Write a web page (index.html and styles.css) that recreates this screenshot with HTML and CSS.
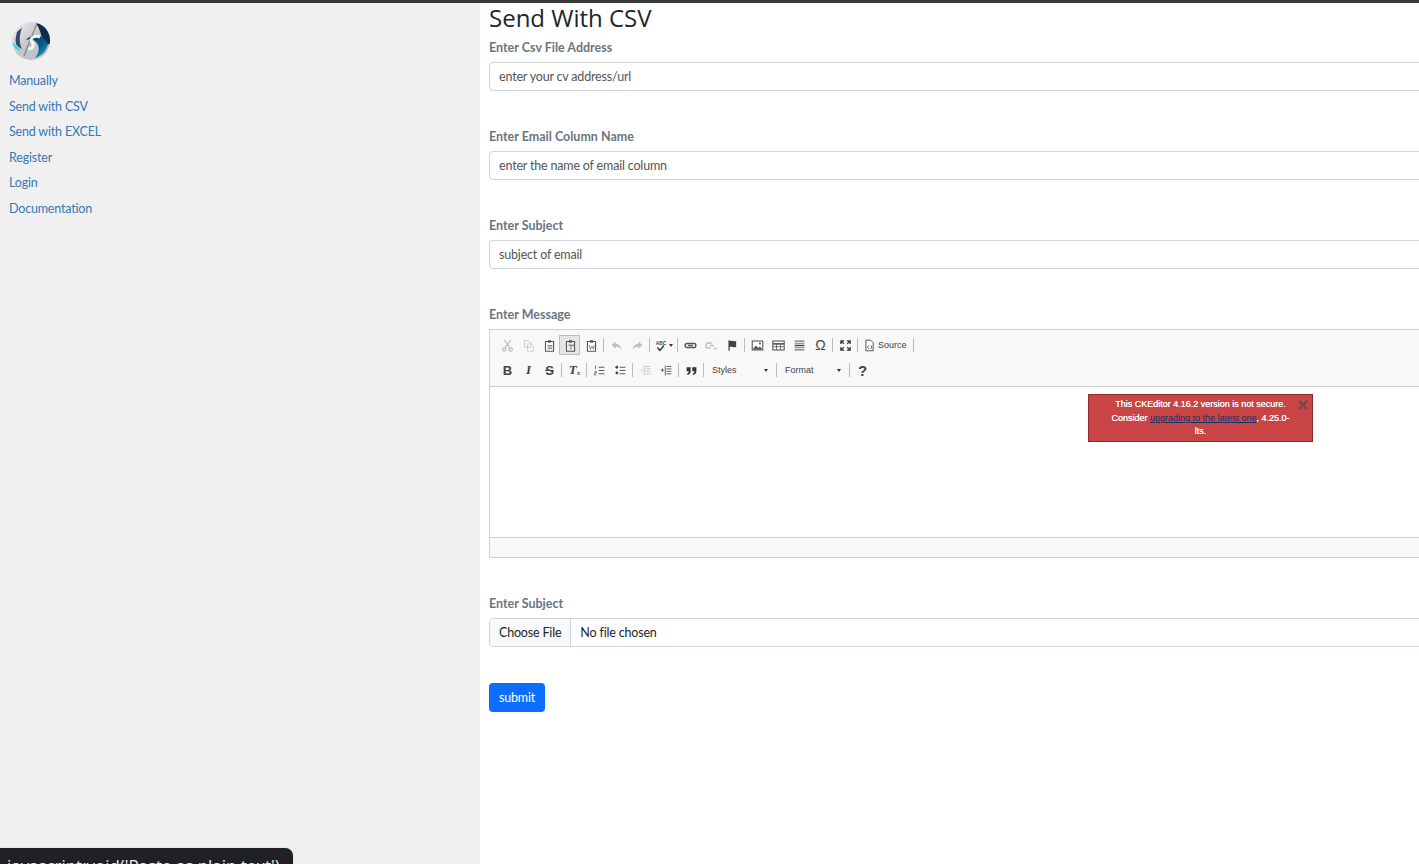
FILE: index.html
```html
<!DOCTYPE html>
<html lang="en">
<head>
    <meta charset="UTF-8">
    <meta name="viewport" content="width=device-width, initial-scale=1">
    <title>Send With CSV</title>
    <link rel="stylesheet" href="styles.css">
</head>
<body>

<div class="topbar"></div>

<div class="page">
    <nav class="sidebar">
        <svg class="logo" viewBox="0 0 42 42" width="42" height="42">
            <defs>
                <linearGradient id="ring" x1="0" y1="0" x2="1" y2="1">
                    <stop offset="0" stop-color="#f0f0f2"/>
                    <stop offset="0.5" stop-color="#c4c6ca"/>
                    <stop offset="1" stop-color="#bdbfc3"/>
                </linearGradient>
                <linearGradient id="swirl" x1="0" y1="0" x2="1" y2="1">
                    <stop offset="0" stop-color="#0b2f52"/>
                    <stop offset="0.6" stop-color="#0d5f8c"/>
                    <stop offset="1" stop-color="#2bc4e6"/>
                </linearGradient>
            </defs>
            <circle cx="21" cy="21" r="19" fill="url(#ring)"/>
            <path d="M26 3 C36 5 41 14 40 23 C38 26 35 25 32 22 C32 16 30 9 26 3 Z" fill="#0c2c4e"/>
            <path d="M16 20 C22 13 33 14 38 24 C37 31 31 36 25 38 C30 32 30 25 25 21 C22 19 19 19 16 20 Z" fill="url(#swirl)"/>
            <path d="M7 12 C9 10 10 9 12 8 C9 15 9 24 12 29 C10 28 8 27 6 24 C5 20 6 16 7 12 Z" fill="#15324f" opacity="0.85"/>
            <path d="M2 23 C5 24 8 26 10 31 C7 30 4 27 2 23 Z" fill="#35d3ee"/>
            <path d="M14 36 L27 3" stroke="#85888c" stroke-width="1.300" fill="none"/>
            <path d="M30 17 C25 15 19 18 22 22 C25 25 23 29 18 29" stroke="#eef6f9" stroke-width="3" fill="none"/>
        </svg>
        <a href="#">Manually</a>
        <a href="#">Send with CSV</a>
        <a href="#">Send with EXCEL</a>
        <a href="#">Register</a>
        <a href="#">Login</a>
        <a href="#">Documentation</a>
    </nav>

    <main class="content">
        <h3>Send With CSV</h3>
        <form class="send-form">
            <div class="field">
                <label for="csv">Enter Csv File Address</label>
                <input type="text" id="csv" placeholder="enter your cv address/url">
            </div>
            <div class="field">
                <label for="column">Enter Email Column Name</label>
                <input type="text" id="column" placeholder="enter the name of email column">
            </div>
            <div class="field">
                <label for="subject">Enter Subject</label>
                <input type="text" id="subject" placeholder="subject of email">
            </div>
            <div class="field">
                <label>Enter Message</label>
                <div class="editor">
                    <div class="toolbar">
                        <div class="tool-row">
                            <span class="btn off"><svg viewBox="0 0 16 16"><path d="M4 1l7 10M12 1L5 11" fill="none" stroke="#555" stroke-width="1.500"/><circle cx="4" cy="13" r="2" fill="none" stroke="#555" stroke-width="1.500"/><circle cx="12" cy="13" r="2" fill="none" stroke="#555" stroke-width="1.500"/></svg></span>
                            <span class="btn off"><svg viewBox="0 0 16 16"><path d="M3 2h5l3 3v5H3zM7 6h4l3 3v6H7z" fill="#fff" stroke="#666"/></svg></span>
                            <span class="btn"><svg viewBox="0 0 16 16"><path d="M3 3h10v12H3z" fill="#fff" stroke="#555" stroke-width="1.300"/><path d="M6 1.500h4v3H6z" fill="#555"/><path d="M5.500 8h6M5.500 10h6M5.500 12h6" stroke="#666"/></svg></span>
                            <span class="btn active"><svg viewBox="0 0 16 16"><path d="M3 3h10v12H3z" fill="#eee" stroke="#555" stroke-width="1.300"/><path d="M6 1.500h4v3H6z" fill="#555"/><path d="M5.500 7.500h6v1.500M8.500 7.500v5.500" fill="none" stroke="#666" stroke-width="1.100"/></svg></span>
                            <span class="btn"><svg viewBox="0 0 16 16"><path d="M3 3h10v12H3z" fill="#fff" stroke="#555" stroke-width="1.300"/><path d="M6 1.500h4v3H6z" fill="#555"/><path d="M5.500 7.500l1 5 2-3.500 2 3.500 1-5" fill="none" stroke="#666"/></svg></span>
                            <i class="sep"></i>
                            <span class="btn off"><svg viewBox="0 0 16 16"><path d="M7 3L2 7.500 7 12V9.500c3 0 5 .5 7 3-.5-4-3-6.500-7-6.500z" fill="#555"/></svg></span>
                            <span class="btn off"><svg viewBox="0 0 16 16"><path d="M9 3l5 4.500L9 12V9.500c-3 0-5 .5-7 3 .5-4 3-6.500 7-6.500z" fill="#555"/></svg></span>
                            <i class="sep"></i>
                            <span class="btn wide"><svg viewBox="0 0 16 16"><text x="1" y="7" class="abc">ABC</text><path d="M3 10.500l3 3.500 5-6" fill="none" stroke="#333" stroke-width="1.800"/></svg><b class="caret"></b></span>
                            <i class="sep"></i>
                            <span class="btn"><svg viewBox="0 0 16 16"><rect x="1.500" y="5.500" width="13" height="5" rx="2" fill="none" stroke="#555" stroke-width="1.800"/><path d="M5 8h6" stroke="#555" stroke-width="1.800"/></svg></span>
                            <span class="btn off"><svg viewBox="0 0 16 16"><path d="M9 5H4a2.500 2.500 0 000 6h3M6 8h5" fill="none" stroke="#555" stroke-width="1.800"/><path d="M11 10l3.500 3.500M14.500 10L11 13.500" stroke="#555" stroke-width="1.200"/></svg></span>
                            <span class="btn"><svg viewBox="0 0 16 16"><path d="M3 1.500h1.500v13H3zM4.500 2.500c3-1.500 5 1 8 0v7.500c-3 1-5-1.500-8 0z" fill="#444"/></svg></span>
                            <i class="sep"></i>
                            <span class="btn"><svg viewBox="0 0 16 16"><rect x="1.500" y="2.500" width="13" height="11" fill="#fff" stroke="#555" stroke-width="1.300"/><path d="M2 13l4-5 3 3 2-2 3 4z" fill="#555"/><circle cx="11" cy="5.500" r="1.300" fill="#555"/></svg></span>
                            <span class="btn"><svg viewBox="0 0 16 16"><rect x="1" y="2.500" width="14" height="11" fill="#fff" stroke="#555" stroke-width="1.300"/><path d="M1 6h14" stroke="#555" stroke-width="2"/><path d="M1 9.500h14M5.500 6v7.500M10.500 6v7.500" stroke="#555"/></svg></span>
                            <span class="btn"><svg viewBox="0 0 16 16"><path d="M2 2.500h12M2 13.500h12" stroke="#777" stroke-width="1.500"/><path d="M2 5.500h12M2 10.500h12" stroke="#999" stroke-width="1.500"/><path d="M2 8h12" stroke="#444" stroke-width="1.800"/></svg></span>
                            <span class="btn glyph omega">Ω</span>
                            <i class="sep"></i>
                            <span class="btn"><svg viewBox="0 0 16 16"><path d="M2 2h4L2 6zM14 2v4l-4-4zM2 14v-4l4 4zM14 14h-4l4-4z" fill="#444" stroke="#444"/><path d="M3 3l3 3M13 3l-3 3M3 13l3-3M13 13l-3-3" stroke="#444" stroke-width="1.600"/></svg></span>
                            <i class="sep"></i>
                            <span class="btn text-btn"><svg viewBox="0 0 16 16"><path d="M3.500 1.500h6l3 3v10h-9z" fill="#fff" stroke="#555" stroke-width="1.200"/><path d="M7 8L5.500 10 7 12M9.500 8L11 10 9.500 12" fill="none" stroke="#333"/></svg>Source</span>
                            <i class="sep"></i>
                        </div>
                        <div class="tool-row">
                            <span class="btn glyph bold">B</span>
                            <span class="btn glyph ital">I</span>
                            <span class="btn glyph strike">S</span>
                            <i class="sep"></i>
                            <span class="btn glyph clear">T<small>x</small></span>
                            <i class="sep"></i>
                            <span class="btn"><svg viewBox="0 0 16 16"><path d="M7 4h7M7 8h7M7 12h7" stroke="#555" stroke-width="1.200"/><path d="M3 2v4M2 9h2v2H2v2.500h2" fill="none" stroke="#555"/></svg></span>
                            <span class="btn"><svg viewBox="0 0 16 16"><path d="M7 4h7M7 8h7M7 12h7" stroke="#555" stroke-width="1.200"/><circle cx="3.500" cy="4" r="1.700" fill="#444"/><circle cx="3.500" cy="11" r="1.700" fill="#444"/></svg></span>
                            <i class="sep"></i>
                            <span class="btn off"><svg viewBox="0 0 16 16"><path d="M8 3h6M8 6h6M8 9h6M8 12h6M2 7.500h3M6.500 2v12" stroke="#555"/></svg></span>
                            <span class="btn"><svg viewBox="0 0 16 16"><path d="M8 3h6M8 6h6M8 9h6M8 12h6M1 7.500h4M3 5.500v4M6.500 2v12" stroke="#444"/></svg></span>
                            <i class="sep"></i>
                            <span class="btn"><svg viewBox="0 0 16 16"><path d="M2 4h5v4.500C7 11 5.500 13 3 13.500l-.5-1.500C4 11.500 4.500 10.500 4.500 9H2zM9 4h5v4.500c0 2.500-1.500 4.500-4 5L9.500 12c1.500-.5 2-1.500 2-3H9z" fill="#333"/></svg></span>
                            <i class="sep"></i>
                            <span class="combo">Styles<b class="caret"></b></span>
                            <i class="sep"></i>
                            <span class="combo">Format<b class="caret"></b></span>
                            <i class="sep"></i>
                            <span class="btn glyph help">?</span>
                        </div>
                    </div>
                    <div class="editable">
                        <div class="notice">
                            This CKEditor 4.16.2 version is not secure. Consider <a href="#">upgrading to the latest one</a>, 4.25.0-lts.
                            <svg class="notice-close" viewBox="0 0 10 10"><path d="M1 1l8 8M9 1L1 9" stroke="#6e4a4a" stroke-width="2.400"/></svg>
                        </div>
                    </div>
                    <div class="statusbar"></div>
                </div>
            </div>
            <div class="field file-field">
                <label for="file">Enter Subject</label>
                <input type="file" id="file">
            </div>
            <button type="submit" class="submit">submit</button>
        </form>
    </main>
</div>

<div class="tooltip">javascript:void('Paste as plain text')</div>

</body>
</html>
```

FILE: styles.css
```css
* {
    box-sizing: border-box;
}

html, body {
    height: 100%;
    margin: 0;
    overflow: hidden;
}

body {
    font-family: 'Lato', 'Noto Sans', sans-serif;
    font-size: 12.5px;
    letter-spacing: -0.18px;
    color: #212529;
    background: #fff;
}

.topbar {
    height: 3px;
    background: #3a3a3a;
}

.page {
    display: flex;
    height: 861px;
}

.sidebar {
    flex: none;
    width: 480px;
    padding: 15px 9px 0;
    background: #f0f0f0;
    display: flex;
    flex-direction: column;
    align-items: flex-start;
}

.logo {
    margin: 2px 0 6px 1px;
}

.sidebar a {
    height: 25.5px;
    line-height: 25.5px;
    color: #337ab7;
    text-decoration: none;
}

.content {
    flex: none;
    width: 1422px;
    padding: 0 9px;
}

h3 {
    margin: 0;
    height: 32px;
    font-family: 'Open Sans', sans-serif;
    font-size: 24px;
    line-height: 30px;
    font-weight: 500;
    letter-spacing: 0;
}

.field {
    margin-bottom: 33px;
}

.file-field {
    margin-bottom: 36px;
}

.field label {
    display: block;
    height: 27px;
    line-height: 25px;
    font-weight: 700;
    letter-spacing: 0;
    color: #6c757d;
}

input[type=text],
input[type=file] {
    display: block;
    width: 100%;
    height: 29px;
    padding: 0 9px;
    border: 1px solid #ced4da;
    border-radius: 4px;
    font: inherit;
    letter-spacing: inherit;
    color: #212529;
    background: #fff;
}

input::placeholder {
    color: #555;
}

input[type=file] {
    padding: 0;
    line-height: 27px;
}

input[type=file]::file-selector-button {
    height: 27px;
    padding: 0 9px;
    margin: 0 9px 0 0;
    border: 0;
    border-right: 1px solid #ced4da;
    background: #f8f9fa;
    font: inherit;
    letter-spacing: inherit;
    color: #212529;
}

.editor {
    position: relative;
    border: 1px solid #d1d1d1;
    letter-spacing: 0;
}

.toolbar {
    height: 57px;
    padding: 5px 0 0 6px;
    background: #f8f8f8;
    border-bottom: 1px solid #d1d1d1;
}

.tool-row {
    display: flex;
    align-items: center;
    height: 20px;
    margin-bottom: 5px;
}

.btn {
    flex: none;
    width: 21px;
    height: 20px;
    padding-left: 2px;
    display: flex;
    align-items: center;
    justify-content: center;
    color: #444;
}

.btn svg {
    width: 13px;
    height: 13px;
    flex: none;
}

.abc {
    font: 700 6px 'Liberation Sans', sans-serif;
    fill: #444;
}

.btn.off {
    opacity: 0.35;
}

.btn.active {
    background: #e5e5e5;
    border: 1px solid #bcbcbc;
}

.btn.wide {
    width: 24px;
    gap: 1px;
}

.sep {
    flex: none;
    width: 1px;
    height: 14px;
    margin: 0 1px 0 2px;
    background: #bcbcbc;
}

.caret {
    flex: none;
    display: inline-block;
    width: 0;
    height: 0;
    border: 2.5px solid transparent;
    border-top: 3px solid #333;
    border-bottom: 0;
}

.text-btn {
    width: 52px;
    gap: 2px;
    justify-content: flex-start;
    padding-left: 4px;
    font: 9px 'Liberation Sans', sans-serif;
}

.glyph {
    font-family: 'Liberation Sans', sans-serif;
    font-size: 13px;
    font-weight: 700;
}

.ital {
    font-family: 'Liberation Serif', serif;
    font-style: italic;
}

.strike {
    text-decoration: line-through;
}

.clear {
    font-family: 'Liberation Serif', serif;
    font-style: italic;
}

.clear small {
    font-size: 7px;
    margin-top: 6px;
}

.omega {
    font-size: 14px;
    font-weight: 400;
}

.help {
    font-size: 15px;
}

.combo {
    flex: none;
    width: 69px;
    height: 20px;
    padding: 0 6px 0 7px;
    display: flex;
    align-items: center;
    justify-content: space-between;
    font: 9px 'Liberation Sans', sans-serif;
    color: #444;
}

.editable {
    position: relative;
    height: 150px;
    background: #fff;
}

.notice {
    position: absolute;
    left: 598px;
    top: 7px;
    width: 225px;
    height: 48px;
    padding: 3px 20px 0;
    background: #c94444;
    border: 1px solid #902b2b;
    color: #fff;
    font: 9px/13.5px 'Liberation Sans', sans-serif;
    text-align: center;
    text-shadow: 0 0 0.6px #fff;
}

.notice a {
    color: #12306b;
    text-shadow: none;
}

.notice-close {
    position: absolute;
    top: 5px;
    right: 4px;
    width: 10px;
    height: 10px;
}

.statusbar {
    height: 20px;
    background: #f8f8f8;
    border-top: 1px solid #d1d1d1;
}

.submit {
    display: block;
    width: 56px;
    height: 29px;
    padding: 0;
    border: 0;
    border-radius: 4px;
    background: #0d6efd;
    color: #fff;
    font: inherit;
    letter-spacing: inherit;
}

.tooltip {
    position: absolute;
    left: 0;
    top: 848px;
    width: 293px;
    height: 30px;
    padding: 6px 0 0 7px;
    background: #202124;
    border-top-right-radius: 8px;
    box-shadow: 0 0 1px #999;
    color: #e8eaed;
    font: 16.9px 'Open Sans', sans-serif;
    letter-spacing: 0;
    white-space: nowrap;
}
```
